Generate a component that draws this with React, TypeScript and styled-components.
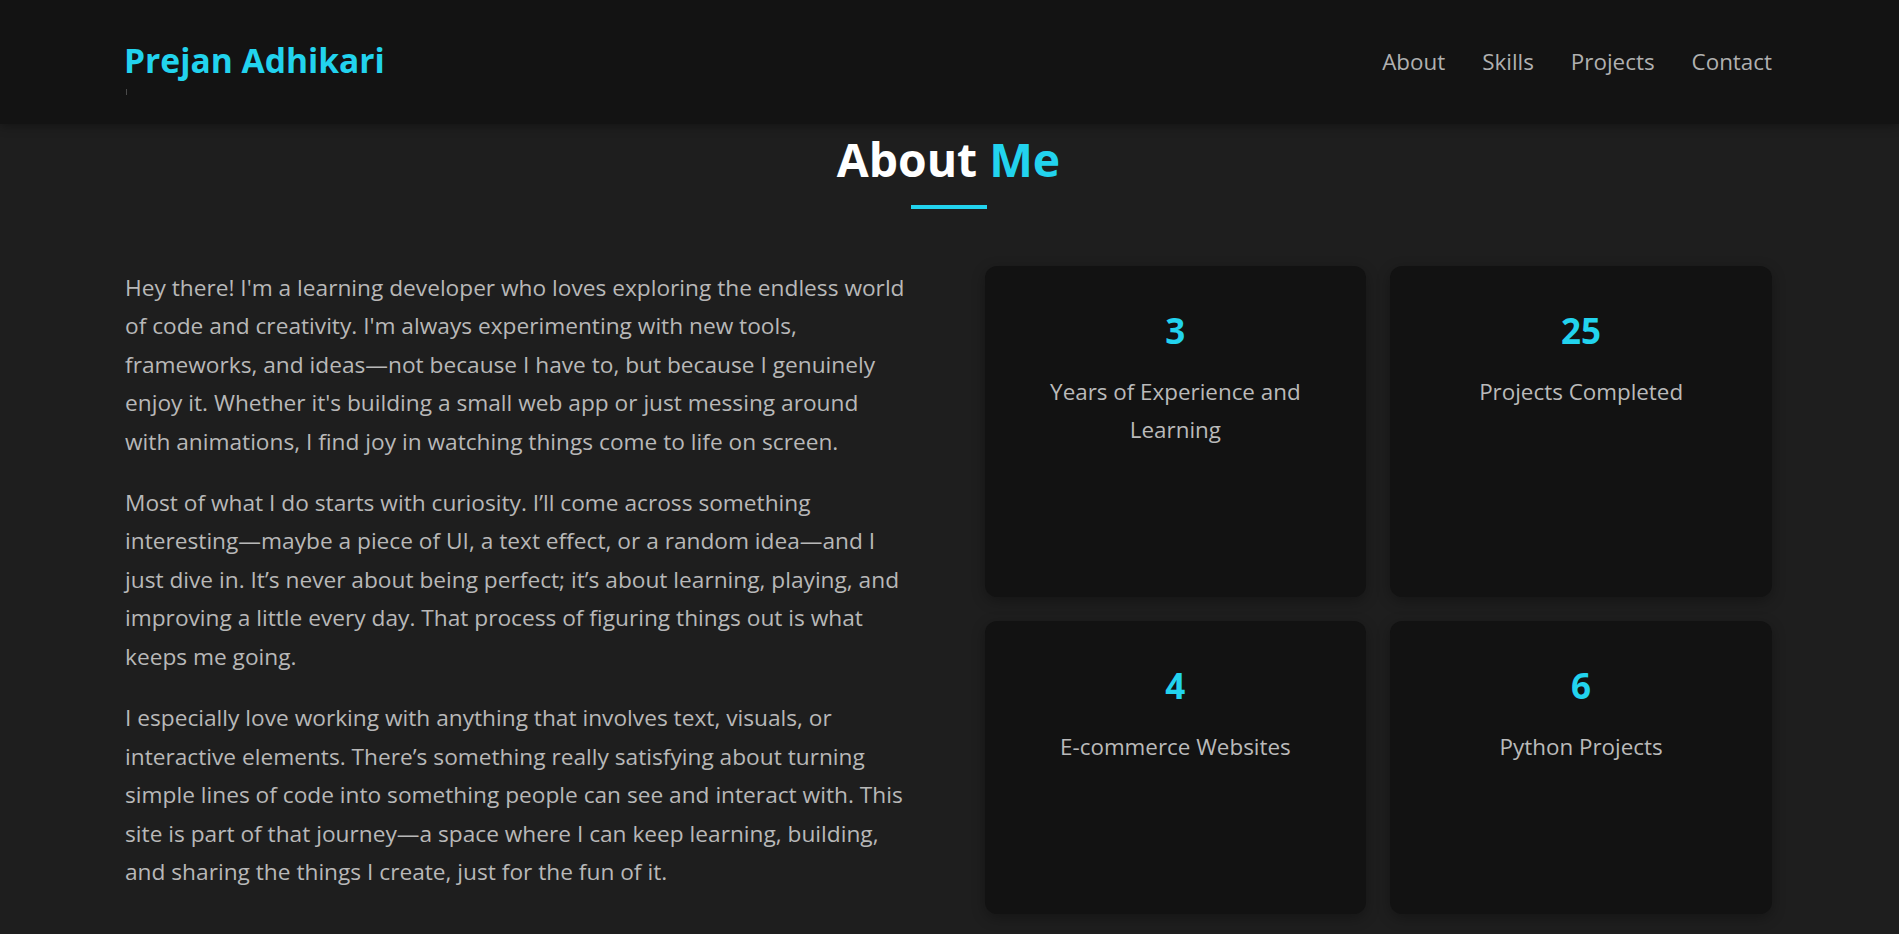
import React from "react";
import styled, { createGlobalStyle } from "styled-components";

const GlobalStyle = createGlobalStyle`
  html, body { margin: 0; padding: 0; background: #1e1e1e; }
  body { font-family: "Open Sans", "Noto Sans", sans-serif; }
  * { box-sizing: border-box; }
`;

const Nav = styled.nav`
  height: 124px;
  display: flex;
  align-items: center;
  justify-content: space-between;
  padding: 0 127px 0 124px;
  background: #131313;
  box-shadow: 0 2px 10px rgba(0, 0, 0, 0.35);
  position: relative;
  z-index: 1;
`;

const Logo = styled.div`
  color: #22d3ee;
  font-weight: 700;
  font-size: 33.6px;
  line-height: 1.36;
  position: relative;
  margin-top: -3px;

  &::after {
    content: "";
    position: absolute;
    left: 2px;
    top: 51px;
    width: 1px;
    height: 6px;
    background: #4a4a4a;
  }
`;

const Links = styled.div`
  display: flex;
  gap: 37px;
  margin-top: -2px;
`;

const Link = styled.a`
  color: #b0b0b0;
  font-size: 22.4px;
  text-decoration: none;
`;

const Section = styled.section`
  padding: 8px 127px 20px 125px;
`;

const Heading = styled.h2`
  margin: 0;
  text-align: center;
  color: #fff;
  font-size: 46.3px;
  line-height: 1.2;
  font-weight: 700;

  span {
    color: #22d3ee;
  }
`;

const Bar = styled.div`
  width: 76px;
  height: 4px;
  background: #22d3ee;
  margin: 17px auto 57px;
`;

const Content = styled.div`
  display: grid;
  grid-template-columns: 1fr 1fr;
  gap: 72px;
`;

const Text = styled.div`
  max-width: 781px;
  padding-top: 3px;

  p {
    margin: 0 0 22.8px;
    color: #b8b8b8;
    font-size: 22.7px;
    line-height: 38.5px;
  }
`;

const Stats = styled.div`
  display: grid;
  grid-template-columns: 1fr 1fr;
  gap: 24px;
`;

const Card = styled.div`
  background: #121212;
  border-radius: 12px;
  box-shadow: 0 4px 14px rgba(0, 0, 0, 0.3);
  padding: 44px 40px;
  text-align: center;
`;

const Num = styled.div`
  color: #22d3ee;
  font-weight: 700;
  font-size: 35px;
  line-height: 42px;
  margin-bottom: 21px;
`;

const Label = styled.div`
  color: #bababa;
  font-size: 22.4px;
  line-height: 38px;
`;

const stats = [
  { n: "3", l: "Years of Experience and Learning" },
  { n: "25", l: "Projects Completed" },
  { n: "4", l: "E-commerce Websites" },
  { n: "6", l: "Python Projects" },
];

export default function App() {
  return (
    <>
      <GlobalStyle />
      <Nav>
        <Logo>Prejan Adhikari</Logo>
        <Links>
          <Link href="#about">About</Link>
          <Link href="#skills">Skills</Link>
          <Link href="#projects">Projects</Link>
          <Link href="#contact">Contact</Link>
        </Links>
      </Nav>
      <Section>
        <Heading>
          About <span>Me</span>
        </Heading>
        <Bar />
        <Content>
          <Text>
            <p>
              Hey there! I'm a learning developer who loves exploring the endless world of code and creativity. I'm always experimenting with new tools, frameworks, and ideas—not because I have to, but because I genuinely enjoy it. Whether it's building a small web app or just messing around with animations, I find joy in watching things come to life on screen.
            </p>
            <p>
              Most of what I do starts with curiosity. I’ll come across something interesting—maybe a piece of UI, a text effect, or a random idea—and I just dive in. It’s never about being perfect; it’s about learning, playing, and improving a little every day. That process of figuring things out is what keeps me going.
            </p>
            <p>
              I especially love working with anything that involves text, visuals, or interactive elements. There’s something really satisfying about turning simple lines of code into something people can see and interact with. This site is part of that journey—a space where I can keep learning, building, and sharing the things I create, just for the fun of it.
            </p>
          </Text>
          <Stats>
            {stats.map((s) => (
              <Card key={s.n}>
                <Num>{s.n}</Num>
                <Label>{s.l}</Label>
              </Card>
            ))}
          </Stats>
        </Content>
      </Section>
    </>
  );
}
